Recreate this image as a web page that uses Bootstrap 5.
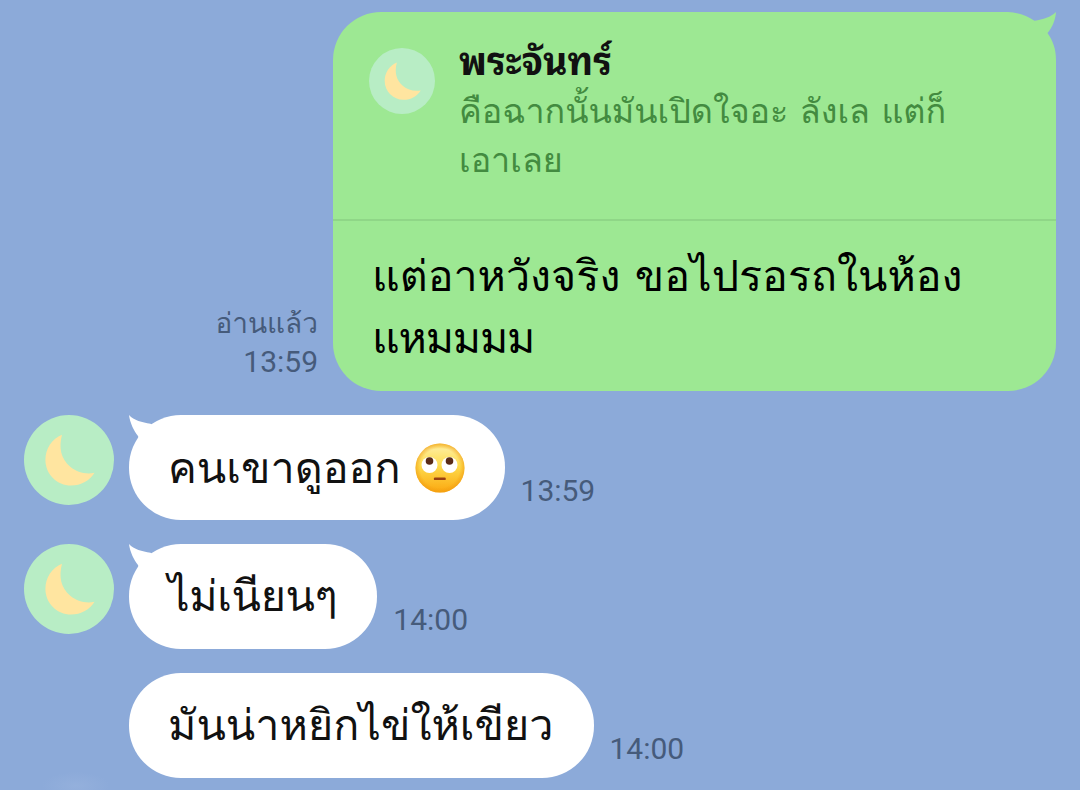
<!DOCTYPE html>
<html lang="th">
<head>
  <meta charset="UTF-8" />
  <meta name="viewport" content="width=device-width, initial-scale=1" />
  <title>Chat</title>
  <link href="https://cdn.jsdelivr.net/npm/bootstrap@5.3.3/dist/css/bootstrap.min.css" rel="stylesheet">
  <style>
    body {
      background-color: #8caad9;
      font-family: Loma, "Noto Sans Thai Looped", sans-serif;
      color: #111;
      overflow: hidden;
    }
    .chat {
      width: 1080px;
      height: 790px;
      padding: 12px 24px;
      gap: 24px;
      overflow: hidden;
      background: radial-gradient(ellipse 34px 14px at 76px 786px, #94b0dc, transparent);
    }
    .bubble {
      border-radius: 52px;
      background-color: #fff;
      height: 105px;
      padding: 0 40px 0 39px;
      font-size: 43.1px;
      line-height: 103px;
      white-space: nowrap;
    }
    .bubble-sent {
      border-radius: 48px;
      background-color: #9de893;
      width: 723px;
      height: 379px;
    }
    .quote {
      height: 209px;
      padding: 25px 36px 0;
      gap: 24px;
      border-bottom: 2px solid #8fd687;
    }
    .quote-name {
      font-family: "Noto Sans Thai Looped", Loma, sans-serif;
      font-size: 37.5px;
      line-height: 42px;
      padding-bottom: 8px;
    }
    .quote-text {
      font-size: 34.1px;
      line-height: 49px;
      color: #438b40;
    }
    .sent-text {
      margin-left: -1px;
      padding: 24px 40px 0;
      font-size: 43px;
      line-height: 62px;
      color: #000;
    }
    .tight {
      letter-spacing: -1.2px;
    }
    .snug {
      letter-spacing: -.4px;
    }
    .stamp {
      color: #465b7b;
      font-family: Roboto, Loma, sans-serif;
      font-size: 30px;
      line-height: 38px;
      margin-bottom: 10px;
    }
    .stamp-sent {
      margin-right: 15px;
    }
    .read-label {
      font-size: 28px;
    }
    .avatar {
      width: 90px;
      height: 90px;
      margin-right: 15px;
    }
    .avatar-quote {
      width: 66px;
      height: 66px;
      margin-top: 11px;
    }
    .tail {
      width: 30px;
      height: 36px;
    }
    .emoji {
      width: 50px;
      height: 50px;
      margin-left: 14px;
    }
  </style>
</head>
<body>
  <!-- shared shapes -->
  <svg width="0" height="0" class="position-absolute">
    <symbol id="moon" viewBox="0 0 90 90">
      <circle cx="45" cy="45" r="45" fill="#b8edc5"/>
      <path d="M38 19.700C28 24 21.400 33 21.400 45C21.400 59 33 70.600 47 70.600C57 70.600 66 65.500 70.500 57.800C62 59.500 53 57.500 46 51.500C37 43.500 34.500 33 38 19.700Z" fill="#ffe5a0"/>
    </symbol>
    <symbol id="tail" viewBox="0 0 30 36">
      <path d="M0 0C5 5.500 13 7.500 21.500 8.700L30 14L14 36L9 21C5 16 1 8 0 0Z"/>
    </symbol>
  </svg>

  <main class="chat d-flex flex-column">
    <div class="d-flex justify-content-end align-items-end">
      <div class="stamp stamp-sent text-end">
        <div class="read-label">อ่านแล้ว</div>
        <div>13:59</div>
      </div>
      <div class="bubble-sent position-relative">
        <svg class="position-absolute top-0 end-0" width="60" height="50" viewBox="0 0 60 50">
          <path d="M0 0H60V50H0Z" fill="#8caad9"/>
          <path d="M0 0H12C23 0.500 31 4 38.500 8.700C47 7.500 55 5 60 0C59.500 8 56 16 51.500 21C57 29 60 37 60 48V50H0Z" fill="#9de893"/>
        </svg>
        <div class="quote d-flex">
          <svg class="avatar-quote flex-shrink-0"><use href="#moon"/></svg>
          <div>
            <div class="quote-name fw-bold">พระจันทร์</div>
            <div class="quote-text">คือฉากนั้นมันเปิดใจอะ ลังเล แต่ก็<br>เอาเลย</div>
          </div>
        </div>
        <div class="sent-text">แต่อาหวังจริง ขอไปรอรถในห้อง<br><span class="tight">แหมมมม</span></div>
      </div>
    </div>

    <div class="d-flex align-items-end">
      <svg class="avatar align-self-start"><use href="#moon"/></svg>
      <div class="bubble position-relative d-flex align-items-center">
        <svg class="tail position-absolute top-0 start-0" fill="#fff"><use href="#tail"/></svg>
        <span>คนเขาดูออก</span>
        <svg class="emoji" viewBox="0 0 50 50">
          <defs>
            <linearGradient id="face" x1="0" y1="0" x2="0" y2="1">
              <stop offset="0" stop-color="#fbd75c"/>
              <stop offset=".12" stop-color="#feeb93"/>
              <stop offset=".45" stop-color="#fedc4e"/>
              <stop offset="1" stop-color="#fba70f"/>
            </linearGradient>
            <radialGradient id="rim">
              <stop offset=".8" stop-color="#f09a10" stop-opacity="0"/>
              <stop offset="1" stop-color="#f09a10" stop-opacity=".6"/>
            </radialGradient>
          </defs>
          <circle cx="25" cy="25" r="24.500" fill="url(#face)"/>
          <circle cx="25" cy="25" r="24.500" fill="url(#rim)"/>
          <circle cx="14.500" cy="22" r="8" fill="#fff"/>
          <circle cx="34.500" cy="22" r="8" fill="#fff"/>
          <circle cx="14.500" cy="18" r="3.800" fill="#5a2c18"/>
          <circle cx="34.500" cy="18" r="3.800" fill="#5a2c18"/>
          <rect x="18.800" y="34.500" width="12" height="2.600" rx="1.200" fill="#994013"/>
        </svg>
      </div>
      <div class="stamp ms-3">13:59</div>
    </div>

    <div class="d-flex align-items-end">
      <svg class="avatar align-self-start"><use href="#moon"/></svg>
      <div class="bubble snug position-relative">
        <svg class="tail position-absolute top-0 start-0" fill="#fff"><use href="#tail"/></svg>
        ไม่เนียนๆ
      </div>
      <div class="stamp ms-3">14:00</div>
    </div>

    <div class="d-flex align-items-end">
      <div class="avatar"></div>
      <div class="bubble">มันน่าหยิกไข่ให้เขียว</div>
      <div class="stamp ms-3">14:00</div>
    </div>
  </main>

  <script src="https://cdn.jsdelivr.net/npm/bootstrap@5.3.3/dist/js/bootstrap.bundle.min.js"></script>
</body>
</html>
